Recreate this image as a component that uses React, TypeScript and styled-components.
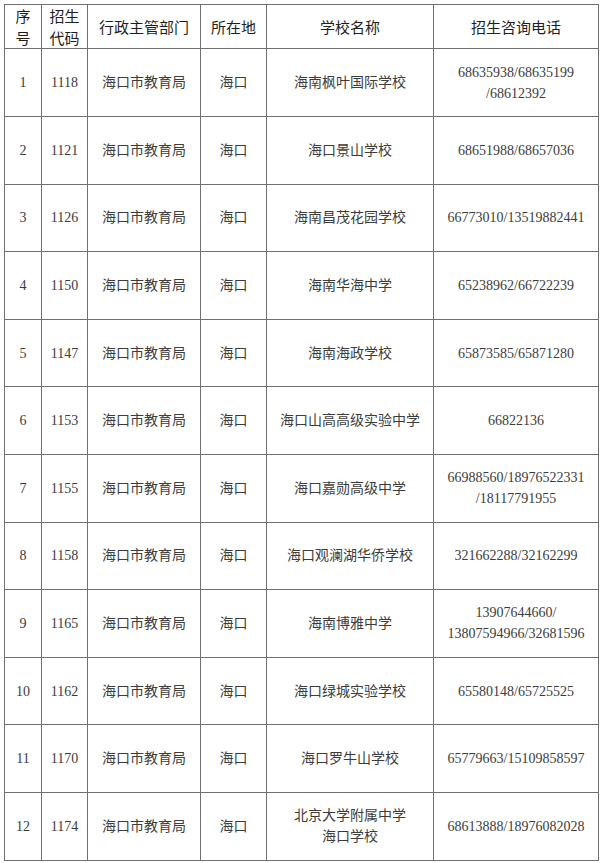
import React from 'react';
import styled, { createGlobalStyle } from 'styled-components';

const GlobalStyle = createGlobalStyle`
  html, body {
    margin: 0;
    padding: 0;
    background: #ffffff;
  }
`;

const Page = styled.div`
  padding: 4px 0 0 4px;
  width: 600px;
  box-sizing: border-box;
`;

const Table = styled.table`
  border-collapse: collapse;
  table-layout: fixed;
  width: 594px;
  border: 1px solid #6f6f6f;
`;

const HeadCell = styled.th`
  border: 1px solid #6f6f6f;
  height: 42px;
  padding: 0;
  font-family: 'Noto Sans CJK SC', 'Noto Sans', sans-serif;
  font-weight: 400;
  font-size: 15px;
  line-height: 21.7px;
  color: #1e1e1e;
  text-align: center;
  vertical-align: middle;
`;

const Row = styled.tr`
  height: 67.6px;
`;

const Cell = styled.td`
  border: 1px solid #6f6f6f;
  padding: 0;
  font-family: 'Liberation Serif', 'Noto Sans CJK SC', serif;
  font-size: 14px;
  line-height: 21px;
  color: #3c3c3c;
  text-align: center;
  vertical-align: middle;
  white-space: nowrap;
`;

type School = {
  no: number;
  code: string;
  name: string[];
  phone: string[];
};

const schools: School[] = [
  { no: 1, code: '1118', name: ['海南枫叶国际学校'], phone: ['68635938/68635199', '/68612392'] },
  { no: 2, code: '1121', name: ['海口景山学校'], phone: ['68651988/68657036'] },
  { no: 3, code: '1126', name: ['海南昌茂花园学校'], phone: ['66773010/13519882441'] },
  { no: 4, code: '1150', name: ['海南华海中学'], phone: ['65238962/66722239'] },
  { no: 5, code: '1147', name: ['海南海政学校'], phone: ['65873585/65871280'] },
  { no: 6, code: '1153', name: ['海口山高高级实验中学'], phone: ['66822136'] },
  { no: 7, code: '1155', name: ['海口嘉勋高级中学'], phone: ['66988560/18976522331', '/18117791955'] },
  { no: 8, code: '1158', name: ['海口观澜湖华侨学校'], phone: ['321662288/32162299'] },
  { no: 9, code: '1165', name: ['海南博雅中学'], phone: ['13907644660/', '13807594966/32681596'] },
  { no: 10, code: '1162', name: ['海口绿城实验学校'], phone: ['65580148/65725525'] },
  { no: 11, code: '1170', name: ['海口罗牛山学校'], phone: ['65779663/15109858597'] },
  { no: 12, code: '1174', name: ['北京大学附属中学', '海口学校'], phone: ['68613888/18976082028'] },
];

function Lines({ lines }: { lines: string[] }) {
  return (
    <>
      {lines.map((l, i) => (
        <React.Fragment key={i}>
          {i > 0 && <br />}
          {l}
        </React.Fragment>
      ))}
    </>
  );
}

export default function App() {
  return (
    <Page>
      <GlobalStyle />
      <Table>
        <colgroup>
          <col style={{ width: 37 }} />
          <col style={{ width: 46 }} />
          <col style={{ width: 113 }} />
          <col style={{ width: 66 }} />
          <col style={{ width: 167 }} />
          <col style={{ width: 165 }} />
        </colgroup>
        <thead>
          <tr>
            <HeadCell>
              序<br />号
            </HeadCell>
            <HeadCell>
              招生<br />代码
            </HeadCell>
            <HeadCell>行政主管部门</HeadCell>
            <HeadCell>所在地</HeadCell>
            <HeadCell>学校名称</HeadCell>
            <HeadCell>招生咨询电话</HeadCell>
          </tr>
        </thead>
        <tbody>
          {schools.map((s) => (
            <Row key={s.no}>
              <Cell>{s.no}</Cell>
              <Cell>{s.code}</Cell>
              <Cell>海口市教育局</Cell>
              <Cell>海口</Cell>
              <Cell>
                <Lines lines={s.name} />
              </Cell>
              <Cell>
                <Lines lines={s.phone} />
              </Cell>
            </Row>
          ))}
        </tbody>
      </Table>
    </Page>
  );
}
